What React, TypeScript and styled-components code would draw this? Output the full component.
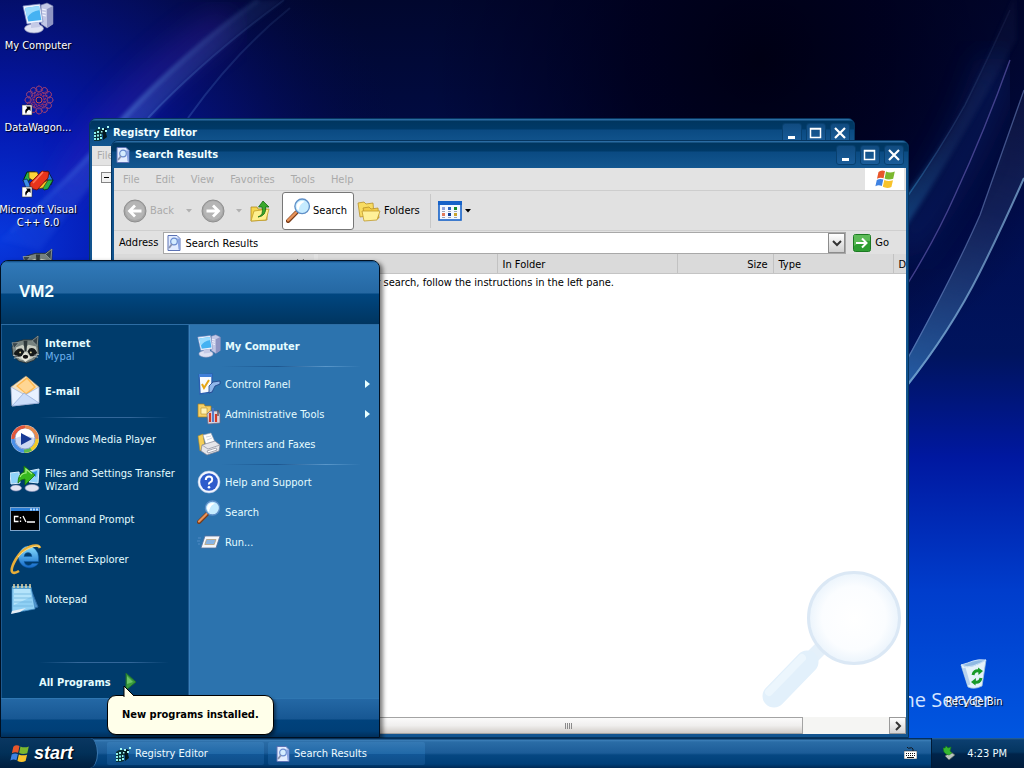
import React from 'react';
import styled, { createGlobalStyle, css } from 'styled-components';

const GlobalStyle = createGlobalStyle`
  * { box-sizing: border-box; }
  body {
    margin: 0;
    background: #0018a0;
    font-family: 'DejaVu Sans Condensed', 'DejaVu Sans', sans-serif;
    font-size: 11px;
    line-height: 13px;
    color: #000;
  }
  button, input, table { font: inherit; color: inherit; }
  button { border: 0; padding: 0; background: none; text-align: left; cursor: default; }
  svg { display: block; flex: none; }
  ul { margin: 0; padding: 0; list-style: none; }
`;

/* ---------- desktop ---------- */

const Screen = styled.div`
  display: flex;
  flex-direction: column;
  height: 100vh;
  overflow: hidden;
`;

const Desktop = styled.main`
  position: relative;
  flex: 1;
  min-height: 0;
`;

const WallpaperArt = styled.svg`
  position: absolute;
  inset: 0;
  width: 100%;
  height: 100%;
`;

const WallpaperTitle = styled.div`
  position: absolute;
  right: 33px;
  bottom: 24px;
  font-family: 'Open Sans', sans-serif;
  font-size: 20px;
  line-height: 28px;
  color: #d4e4ff;
`;

const IconColumn = styled.ul`
  position: relative;
  width: 76px;
`;

const IconCell = styled.li`
  height: 82px;
  padding-top: 2px;
`;

const Shortcut = styled.button`
  display: flex;
  flex-direction: column;
  align-items: center;
  gap: 5px;
  width: 76px;
  color: #fff;
  text-align: center;
  text-shadow: 1px 1px 1px #000;
  span { margin: 0 -8px; white-space: pre; }
`;

const BinSpot = styled.div`
  position: absolute;
  right: 12px;
  bottom: 30px;
`;

/* ---------- windows ---------- */

const Window = styled.section<{ $top: number; $left: number; $right: number }>`
  position: absolute;
  top: ${p => p.$top}px;
  left: ${p => p.$left}px;
  right: ${p => p.$right}px;
  bottom: 0;
  display: flex;
  flex-direction: column;
  padding: 0 2px 3px;
  border: 1px solid #06355f;
  border-radius: 7px 7px 0 0;
  background: #12548f;
  overflow: hidden;
`;

const TitleBar = styled.header`
  display: flex;
  align-items: center;
  flex: none;
  gap: 4px;
  height: 27px;
  margin: 0 -2px;
  padding: 0 4px 0 3px;
  background: linear-gradient(#2a6ba2 0, #2a6ba2 1px, #00365f 2px, #003a68 10px, #0a4a82 11px, #13568f 26px);
  color: #f0ffff;
  font-weight: bold;
`;

const TitleIcon = styled.span`
  display: grid;
  place-items: center;
  width: 16px;
`;

const WindowTitle = styled.h1`
  flex: 1;
  margin: 0;
  font-size: 11px;
  line-height: 14px;
`;

const TitleButtons = styled.div`
  display: flex;
  gap: 4px;
`;

const TitleButton = styled.button`
  display: grid;
  place-items: center;
  width: 20px;
  height: 20px;
  border: 1px solid #08406f;
  border-radius: 3px;
  background: linear-gradient(#104b80, #1a5d9a);
`;

const MenuBar = styled.nav`
  display: flex;
  align-items: center;
  flex: none;
  height: 23px;
  padding-left: 9px;
  gap: 16px;
  background: #e3e3e3;
  border-bottom: 1px solid #cdcdcd;
  button { color: #aaa; }
`;

const LogoCell = styled.div`
  display: grid;
  place-items: center;
  width: 39px;
  height: 22px;
  margin: 0 2px 0 auto;
  background: #fff;
`;

const RegistryMenu = styled(MenuBar)`
  height: 20px;
  padding-left: 5px;
`;

const RegistryTree = styled.div`
  flex: 1;
  padding: 6px 9px;
  background: #fff;
`;

const Toolbar = styled.div`
  display: flex;
  align-items: center;
  flex: none;
  height: 40px;
  padding-left: 9px;
  background: #e1e1e1;
  border-bottom: 1px solid #cfcfcf;
`;

const ToolButton = styled.button<{ $width: number; $active?: boolean; $muted?: boolean }>`
  display: flex;
  align-items: center;
  gap: 3px;
  flex: none;
  width: ${p => p.$width}px;
  height: 38px;
  ${p => p.$muted && css`color: #aaa;`}
  ${p => p.$active && css`
    padding-left: 3px;
    margin-right: 3px;
    gap: 2px;
    border: 1px solid #777;
    border-radius: 3px;
    background: #fff;
  `}
`;

const Divider = styled.span`
  flex: none;
  width: 1px;
  height: 34px;
  margin: 0 7px 0 0;
  background: #c8c8c8;
`;

const AddressBar = styled.form`
  display: flex;
  align-items: center;
  flex: none;
  height: 23px;
  padding: 0 17px 0 5px;
  gap: 5px;
  background: #e1e1e1;
`;

const Combo = styled.div`
  display: flex;
  align-items: center;
  flex: 1;
  height: 22px;
  padding-left: 3px;
  border: 1px solid #a8a8a8;
  background: #fff;
`;

const AddressInput = styled.input`
  flex: 1;
  min-width: 0;
  height: 18px;
  margin: 2px 0 0;
  padding: 0 0 0 4px;
  border: 0;
  background: none;
  outline: 0;
`;

const ComboArrow = styled.button`
  display: grid;
  place-items: center;
  width: 17px;
  height: 20px;
  border: 1px solid #8c8c8c;
  background: linear-gradient(#fff, #cfcfcf);
`;

const GoButton = styled.button`
  display: flex;
  align-items: center;
  gap: 4px;
  margin-left: 2px;
`;

const Panes = styled.div`
  display: flex;
  flex: 1;
  min-height: 0;
  background: #fff;
`;

const ExplorerPane = styled.aside`
  flex: none;
  width: 204px;
  border-right: 4px solid #e1e1e1;
`;

const PaneHeader = styled.div`
  display: flex;
  justify-content: flex-end;
  height: 19px;
  padding: 5px 9px;
  background: #dadada;
`;

const ListPane = styled.div`
  position: relative;
  display: flex;
  flex-direction: column;
  flex: 1;
  min-width: 0;
  overflow: hidden;
`;

const ListBody = styled.div`
  flex: 1;
  min-height: 0;
  overflow: hidden;
`;

const ResultsTable = styled.table`
  width: 700px;
  border-collapse: collapse;
  table-layout: fixed;
  th {
    height: 19px;
    padding: 2px 5px 0;
    border-right: 1px solid #c2c2c2;
    border-bottom: 1px solid #c4c4c4;
    background: #dadada;
    font-weight: normal;
    text-align: left;
  }
  td { padding: 2px 7px; white-space: nowrap; }
`;

const Th = styled.th<{ $width: number; $end?: boolean }>`
  width: ${p => p.$width}px;
  && { text-align: ${p => (p.$end ? 'right' : 'left')}; }
`;

const Watermark = styled.svg`
  position: absolute;
  right: 3px;
  bottom: 18px;
`;

const ScrollBar = styled.div`
  display: flex;
  flex: none;
  height: 17px;
  background: #f5f5f3;
`;

const ScrollThumb = styled.div`
  display: grid;
  place-items: center;
  flex: 467;
  border: 1px solid #a3a3a3;
  background: linear-gradient(#fbfbfb, #f0efee 50%, #d2cdc9);
`;

const ScrollTrack = styled.div`
  flex: 86;
`;

const ScrollButton = styled.button`
  display: grid;
  place-items: center;
  width: 17px;
  border: 1px solid #9a9a9a;
  background: linear-gradient(#fff, #d4d4d4);
`;

/* ---------- start menu ---------- */

const StartMenu = styled.section`
  position: absolute;
  left: 0;
  bottom: 0;
  display: flex;
  flex-direction: column;
  width: 380px;
  border: 1px solid #001022;
  border-radius: 8px 8px 0 0;
  background: #2c73ae;
  color: #e4fcff;
  box-shadow: 3px 2px 4px rgba(0, 0, 0, 0.5);
`;

const UserHeader = styled.header`
  display: flex;
  align-items: center;
  height: 64px;
  padding: 0 0 2px 18px;
  border-radius: 7px 7px 0 0;
  border-bottom: 1px solid #2d6da4;
  background: linear-gradient(#10497f 0, #3079b8 2px, #2568a3 32px, #004680 33px, #003560 63px);
  font: bold 17px/20px 'Liberation Sans', sans-serif;
  color: #f2ffff;
`;

const MenuColumns = styled.div`
  display: flex;
  height: 373px;
`;

const ProgramsColumn = styled.div`
  display: flex;
  flex-direction: column;
  width: 188px;
  padding: 4px 0 0 8px;
  border-left: 1px solid #1c588e;
  border-right: 1px solid #1c588e;
  background: #003c6c;
`;

const PlacesColumn = styled.div`
  flex: 1;
  padding: 6px 9px 0 7px;
  border-left: 1px solid #3a82bc;
`;

const ProgramItem = styled.button`
  display: flex;
  align-items: center;
  gap: 5px;
  width: 176px;
  height: 40px;
`;

const PinnedItem = styled(ProgramItem)`
  height: 41px;
`;

const PlaceItem = styled.button`
  display: flex;
  align-items: center;
  gap: 4px;
  width: 100%;
  height: 30px;
  span { flex: 1; }
`;

const ItemText = styled.span`
  display: flex;
  flex-direction: column;
  padding-top: 1px;
  small { font-size: 11px; color: #6db2ee; }
`;

const Rule = styled.hr<{ $light?: boolean }>`
  width: 130px;
  height: 1px;
  margin: 6px 0 1px 29px;
  border: 0;
  background: linear-gradient(90deg, transparent, #33679a 30%, #33679a 70%, transparent);
  ${p => p.$light && css`
    width: 140px;
    margin: 5px 0 2px 24px;
    background: linear-gradient(90deg, transparent, #1c5790 40%, #5a97ca 75%, transparent);
  `}
`;

const AllPrograms = styled.button`
  display: flex;
  align-items: center;
  gap: 14px;
  height: 34px;
  padding: 2px 0 0 29px;
  font-weight: bold;
`;

const Push = styled.div`
  flex: 1;
`;

const MenuFooter = styled.footer`
  height: 39px;
  border-top: 1px solid #2f77b2;
  background: linear-gradient(#2468a5, #175793 20px, #00427c 21px, #003f77 32px, #002f5b);
`;

const Balloon = styled.div`
  position: absolute;
  left: 107px;
  bottom: 3px;
  padding: 12px 14px;
  border: 1px solid #000;
  border-radius: 9px;
  background: #ffffea;
  color: #000;
  font-weight: bold;
  line-height: 14px;
  white-space: nowrap;
  box-shadow: 2px 2px 3px rgba(0, 0, 0, 0.4);
`;

const BalloonTail = styled.svg`
  position: absolute;
  left: 15px;
  top: -11px;
`;

/* ---------- taskbar ---------- */

const Taskbar = styled.footer`
  position: relative;
  display: flex;
  align-items: stretch;
  flex: none;
  height: 30px;
  background: linear-gradient(#05305a 0, #05305a 1px, #3d80b9 2px, #2a6ca6 4px, #1c5c98 15px, #064782 17px, #003f78 26px, #002a55);
  color: #eefaff;
`;

const StartButton = styled.button`
  display: flex;
  align-items: center;
  gap: 5px;
  width: 98px;
  padding-left: 10px;
  margin-right: 9px;
  border-right: 1px solid #3a78b0;
  border-radius: 0 8px 8px 0 / 0 15px 15px 0;
  background: linear-gradient(#0a3761, #023058 50%, #001e3e);
  font: italic bold 18px/20px 'Liberation Sans', sans-serif;
  color: #fff;
  text-shadow: 1px 1px 1px #001;
`;

const TaskButton = styled.button`
  display: flex;
  align-items: center;
  gap: 4px;
  width: 157px;
  height: 23px;
  margin: 4px 4px 0 0;
  padding-left: 8px;
  border-radius: 2px;
  background: linear-gradient(#3579b4, #2169a8 50%, #125797 52%, #0e4d88);
`;

const Keyboard = styled.button`
  margin: 0 14px 0 auto;
`;

const Tray = styled.div`
  display: flex;
  align-items: center;
  gap: 12px;
  padding: 0 17px 0 11px;
  border-left: 1px solid #001a36;
  background: linear-gradient(#2a659c 0, #0c3f70 2px, #043560 14px, #00244a 16px, #001c3c);
`;

/* ---------- drawings ---------- */

type Size = { size?: number };

const Wallpaper = () => (
  <WallpaperArt viewBox="0 0 1024 738" preserveAspectRatio="none" aria-hidden="true">
    <defs>
      <linearGradient id="sky" x1="0" y1="0" x2="0" y2="1">
        <stop offset="0" stopColor="#01072e" />
        <stop offset=".3" stopColor="#010e50" />
        <stop offset=".48" stopColor="#00145e" />
        <stop offset=".62" stopColor="#0018a0" />
        <stop offset=".8" stopColor="#003dcc" />
        <stop offset="1" stopColor="#0056e0" />
      </linearGradient>
      <radialGradient id="left" gradientUnits="userSpaceOnUse" cx="0" cy="240" r="420">
        <stop offset="0" stopColor="#0838dd" />
        <stop offset=".3" stopColor="#0418b4" stopOpacity=".95" />
        <stop offset=".65" stopColor="#050f70" stopOpacity=".7" />
        <stop offset="1" stopColor="#020640" stopOpacity="0" />
      </radialGradient>
      <radialGradient id="dark" gradientUnits="userSpaceOnUse" cx="760" cy="60" r="330">
        <stop offset="0" stopColor="#000014" />
        <stop offset=".4" stopColor="#00001c" stopOpacity=".85" />
        <stop offset="1" stopColor="#000020" stopOpacity="0" />
      </radialGradient>
      <linearGradient id="beam" gradientUnits="userSpaceOnUse" x1="270" y1="0" x2="0" y2="250">
        <stop offset="0" stopColor="#4a6fa8" stopOpacity=".25" />
        <stop offset=".5" stopColor="#5a8ee0" stopOpacity=".55" />
        <stop offset="1" stopColor="#3a78ff" stopOpacity=".15" />
      </linearGradient>
      <linearGradient id="ray" gradientUnits="userSpaceOnUse" x1="1024" y1="20" x2="908" y2="390">
        <stop offset="0" stopColor="#6d7298" stopOpacity=".1" />
        <stop offset=".5" stopColor="#5a78a8" stopOpacity=".35" />
        <stop offset="1" stopColor="#4ba8e0" stopOpacity=".9" />
      </linearGradient>
      <linearGradient id="veil" gradientUnits="userSpaceOnUse" x1="1015" y1="0" x2="900" y2="220">
        <stop offset="0" stopColor="#3a4270" stopOpacity=".15" />
        <stop offset=".6" stopColor="#2f5288" stopOpacity=".4" />
        <stop offset="1" stopColor="#2378b4" stopOpacity=".8" />
      </linearGradient>
      <filter id="fine"><feGaussianBlur stdDeviation="0.7" /></filter>
      <filter id="soft"><feGaussianBlur stdDeviation="2" /></filter>
      <filter id="haze"><feGaussianBlur stdDeviation="16" /></filter>
    </defs>
    <rect width="1024" height="738" fill="url(#sky)" />
    <rect width="1024" height="738" fill="url(#left)" />
    <rect width="1024" height="500" fill="url(#dark)" />
    <path d="M60 200Q110 100 230 20" stroke="#5b2bc8" strokeWidth="20" fill="none" opacity=".4" filter="url(#haze)" />
    <path d="M258 0Q185 52 122 116Q70 180 0 240L40 250Q90 185 150 118Q200 62 284 0Z" fill="url(#beam)" opacity=".5" filter="url(#soft)" />
    <path d="M258 0Q185 52 126 116Q74 176 10 232" stroke="url(#beam)" strokeWidth="3" fill="none" filter="url(#soft)" />
    <path d="M284 0Q205 58 148 118M290 8Q235 52 188 118" stroke="url(#beam)" strokeWidth="2" fill="none" opacity=".6" filter="url(#fine)" />
    <path d="M900 250Q975 150 1000 60" stroke="#123a9c" strokeWidth="30" fill="none" opacity=".35" filter="url(#haze)" />
    <path d="M1012 0Q985 65 965 105Q940 150 900 202V235Q945 170 1016 40V0Z" fill="url(#veil)" opacity=".55" filter="url(#soft)" />
    <path d="M1010 10Q985 65 965 105Q940 150 905 200" stroke="url(#veil)" strokeWidth="1.500" fill="none" filter="url(#fine)" />
    <path d="M1010 60Q985 130 955 195Q935 240 905 288" stroke="#6a60b8" strokeWidth="1.400" fill="none" opacity=".6" filter="url(#fine)" />
    <path d="M1024 90Q1003 150 980 215Q955 272 905 362V390Q960 320 990 250L1024 180Z" fill="url(#ray)" opacity=".55" filter="url(#fine)" />
    <path d="M1024 90Q1003 150 980 215Q955 272 908 358" stroke="#7a94d0" strokeWidth="1.300" fill="none" opacity=".5" filter="url(#fine)" />
    <path d="M1024 178Q1000 232 980 272Q950 332 905 388" stroke="#86b4dc" strokeWidth="2" fill="none" opacity=".7" filter="url(#fine)" />
  </WallpaperArt>
);

const Computer = ({ size = 32 }: Size) => (
  <svg width={size} height={size} viewBox="0 0 32 32">
    <path d="M19 3l6-2 6 3v18l-6 4-6-4z" fill="#c3c8e6" stroke="#7279a8" strokeWidth=".6" />
    <path d="M25 7l6-3v18l-6 4z" fill="#8f95c4" />
    <path d="M20 7l4 1M20 10l4 1M20 13l4 1" stroke="#f4f5ff" strokeWidth="1.2" />
    <path d="M1 4l17-2 3 18-16 2z" fill="#eef4ff" stroke="#7b8bc0" strokeWidth=".7" />
    <path d="M3 6l14-2 2.300 14-13 1.600z" fill="#45b2f2" />
    <path d="M3 6l14-2 .7 4Q9 9 5 16z" fill="#9adcff" />
    <ellipse cx="12" cy="26.500" rx="9.500" ry="4.500" fill="#dfe2f3" stroke="#8b90b8" strokeWidth=".7" />
    <path d="M9 21l8-1 1 5-9 1z" fill="#c5cae6" />
  </svg>
);

const ShortcutArrow = () => (
  <g>
    <rect x="0" y="21" width="10" height="10" fill="#fff" stroke="#333" strokeWidth=".6" />
    <path d="M4 22.500h4.500v4.500L7 25.600Q4.500 27 4 30 1.800 26.500 5.300 24z" fill="#000" />
  </g>
);

const DataWagon = () => (
  <svg width="32" height="32" viewBox="0 0 32 32">
    <g fill="none" stroke="#a83464" strokeWidth=".8">
      {[0, 30, 60, 90, 120, 150].map(a => (
        <g key={a} transform={`rotate(${a} 17 16)`}>
          <ellipse cx="17" cy="16" rx="14" ry="5" strokeDasharray="2 1" />
          <circle cx="17" cy="5" r="3" stroke="#84407e" />
          <circle cx="17" cy="27" r="3" stroke="#84407e" />
        </g>
      ))}
    </g>
    <circle cx="17" cy="16" r="3" fill="#07108a" stroke="#d2504a" />
    <ShortcutArrow />
  </svg>
);

const VisualCpp = () => (
  <svg width="32" height="32" viewBox="0 0 32 32">
    <path d="M1 15L5 6h8l-3 5-6 7z" fill="#28b04a" stroke="#04260c" />
    <path d="M7 6h8l2 4-5 5-5-3z" fill="#ffd43a" stroke="#5a3a00" strokeWidth=".7" />
    <path d="M1 14l4-1 4 8-1 3-4-2z" fill="#3c8fe8" stroke="#081c50" strokeWidth=".7" />
    <path d="M20 6l6-1 5 9-2 5-5-7z" fill="#2678e0" stroke="#061c50" />
    <path d="M31 14l-5 9-4 1-2-3 6-7z" fill="#28b04a" stroke="#04260c" strokeWidth=".7" />
    <path d="M26 14l-5 8-6 1 5-6z" fill="#f6c928" stroke="#4a3300" strokeWidth=".7" />
    <path d="M8 17L20 5l7 1-1 6-11 12-7-2z" fill="#e8341c" stroke="#6a0d04" strokeWidth=".8" />
    <path d="M11 17L21 6" stroke="#ff7a5c" strokeWidth="1.500" />
    <ShortcutArrow />
  </svg>
);

const Raccoon = ({ size = 30 }: Size) => (
  <svg width={size} height={size} viewBox="0 0 30 30">
    <path d="M3 8l6-2 4-1h5l4 0 6-4 0 9 1 9-5 7-8 3-8-2-6-6-1-8z" fill="#77827f" stroke="#20292c" strokeWidth=".8" />
    <path d="M1 8l7 0-5 6zM28 1l-6 5 5 5z" fill="#39454a" stroke="#9aa6a6" strokeWidth=".7" />
    <path d="M5 13l7-3 3 3 3-3 8 2 1 7-5 5-6 3-7-2-4-4z" fill="#c9cdc2" />
    <path d="M3 19q3-6 8-5l3 3-3 5-6 1zM27 18q-3-6-8-4l-2 3 3 5 5 0z" fill="#15191a" />
    <path d="M13 6h4l-1 11h-2z" fill="#2e373a" />
    <path d="M10 23l5-5 5 5-5 5z" fill="#ecebdf" />
    <ellipse cx="15" cy="22.500" rx="2.800" ry="2" fill="#111" />
    <circle cx="9.500" cy="18" r="1" fill="#d8cf9a" /><circle cx="20.500" cy="18" r="1" fill="#d8cf9a" />
    <path d="M2 21l5 1M3 24l5-1M29 20l-5 1M28 23l-5-1" stroke="#cfd6d4" strokeWidth=".8" />
  </svg>
);

const Mail = () => (
  <svg width="30" height="32" viewBox="0 0 30 32">
    <path d="M1 12L16 1l13 11v16L2 31z" fill="#f3e1c0" stroke="#a98a5c" strokeWidth=".6" />
    <path d="M6 11L17 2l9 10-9 8z" fill="#ffb84e" />
    <path d="M8 11l9-7 7 8-8 6z" fill="#ffd694" />
    <path d="M1 12l14 8 14-8v16L2 31z" fill="#e8f1ff" stroke="#8da6d6" strokeWidth=".6" />
    <path d="M2 31l12-13L29 28z" fill="#cbddfa" stroke="#8da6d6" strokeWidth=".7" />
  </svg>
);

const MediaPlayer = () => (
  <svg width="30" height="30" viewBox="0 0 30 30">
    <circle cx="15" cy="15" r="14" fill="#d5dff2" />
    <g fill="none" strokeWidth="3.400">
      <path d="M15 3A12 12 0 0 1 27 15" stroke="#e88a4e" />
      <path d="M27 15A12 12 0 0 1 15 27" stroke="#f2c926" />
      <path d="M15 27A12 12 0 0 1 3 15" stroke="#4a8fe8" />
      <path d="M3 15A12 12 0 0 1 15 3" stroke="#e0573c" />
      <path d="M21 25A12 12 0 0 1 14 27" stroke="#5aba50" />
    </g>
    <circle cx="15" cy="15" r="10" fill="#ccd8f2" stroke="#8aa0cc" />
    <path d="M5.500 14a9.500 9.500 0 0 1 19 0Q15 10 5.500 14z" fill="#fff" />
    <path d="M11 9l11 6-11 6z" fill="#173a94" />
  </svg>
);

const Transfer = () => (
  <svg width="30" height="30" viewBox="0 0 30 30">
    <path d="M0 9l9-1 1 11-9 1zM19 7l10-2-1 14-9-1z" fill="#8fd2fa" stroke="#d5ecff" />
    <path d="M20 9l7-2-1 6z" fill="#2f8fe0" />
    <ellipse cx="6" cy="24" rx="5.500" ry="3" fill="#e2e4f2" stroke="#8c90b8" strokeWidth=".6" />
    <ellipse cx="22" cy="24" rx="7" ry="3.500" fill="#e2e4f2" stroke="#8c90b8" strokeWidth=".6" />
    <path d="M8 19q0-9 6-11V2l11 9-10 10v-6q-4 0-7 4z" fill="#37b81e" stroke="#1a7208" strokeWidth=".8" />
    <path d="M10 13q2-4 6-4V5l6 5" fill="none" stroke="#a8ee88" strokeWidth="1.200" />
  </svg>
);

const CommandPrompt = () => (
  <svg width="30" height="24" viewBox="0 0 30 24">
    <rect x=".5" y=".5" width="29" height="23" fill="#000" stroke="#7fa5cc" />
    <rect x="1" y="1" width="28" height="3" fill="#2a7fd8" />
    <path d="M20 1.500h2v2h-2zM23 1.500h2v2h-2zM26 1.500h2v2h-2z" fill="#b8dcff" />
    <path d="M8.500 9.500h-4v5h4M10.500 10v1.500M10.500 13.500V15M13 9l3 6M17 15h8" fill="none" stroke="#fff" strokeWidth="1.300" />
  </svg>
);

const Explorer = () => (
  <svg width="32" height="32" viewBox="0 0 32 32">
    <defs>
      <linearGradient id="ie" x1="0" y1="0" x2="0" y2="1">
        <stop offset="0" stopColor="#8be0ff" /><stop offset="1" stopColor="#1268c8" />
      </linearGradient>
    </defs>
    <path d="M17.500 3a11 11 0 0 1 11 11.500v4H14q1 4 4.500 4 2.500 0 3.500-2h6.200A11 11 0 1 1 17.500 3zM14 13.500h8q-.5-4-4-4t-4 4z" fill="url(#ie)" fillRule="evenodd" stroke="#1260b0" strokeWidth=".5" />
    <path d="M30 5C28-1 13 4 6 16S1 33 9 28" fill="none" stroke="#e8ae38" strokeWidth="2.600" />
    <path d="M30 4C27 1 14 6 8 14" fill="none" stroke="#fbe08c" strokeWidth="1" />
  </svg>
);

const Notepad = () => (
  <svg width="30" height="32" viewBox="0 0 30 32">
    <path d="M20 4l8 20-14 4z" fill="#4f94cc" stroke="#2c6ba5" />
    <path d="M2 4h19l4 22-23 4z" fill="#8fd0f4" stroke="#3c86be" strokeWidth=".7" />
    <path d="M4 6h16l1 8L4 22z" fill="#b4e4fb" />
    <path d="M4 11h17M4 15h18M4 19h18M3 23h20" stroke="#6fb4de" strokeWidth=".8" />
    <path d="M2 3h19v3H2z" fill="#57a0cf" />
    <path d="M4 1v4M8 1v4M12 1v4M16 1v4M20 1v4" stroke="#e9d8a6" strokeWidth="1.500" />
    <path d="M1 31l1-3 14-3-6 4z" fill="#e7edf4" />
  </svg>
);

const ControlPanel = () => (
  <svg width="24" height="24" viewBox="0 0 24 24">
    <path d="M2 3l13-1v18l-12 2z" fill="#f6faff" stroke="#2b5fb0" strokeWidth="1.400" />
    <path d="M2 2h13v3H2z" fill="#3f7fd8" />
    <path d="M5 12l2 4 5-8" fill="none" stroke="#e4a516" strokeWidth="2" />
    <path d="M12 14l4-4 7-1 0 3-5 2-3 6-3 1z" fill="#8fb6ea" stroke="#1d3f84" strokeWidth=".8" />
  </svg>
);

const AdminTools = () => (
  <svg width="24" height="24" viewBox="0 0 24 24">
    <path d="M1 2h6l1 2h6v11H1z" fill="#f6d168" stroke="#a77d1c" strokeWidth=".7" />
    <path d="M4 6h6v6H4z" fill="#fff3b8" stroke="#b8902c" strokeWidth=".6" />
    <path d="M10 12l3-3h8l2 3v9l-12 1z" fill="#d9d4e0" stroke="#6c6884" strokeWidth=".7" />
    <path d="M13 11v9M19 12v8" stroke="#d43a26" strokeWidth="2.200" />
    <path d="M16 6v14" stroke="#4a74c8" strokeWidth="1.800" />
    <path d="M21 8v6" stroke="#5c5866" strokeWidth="1.500" />
  </svg>
);

const Printer = () => (
  <svg width="24" height="24" viewBox="0 0 24 24">
    <path d="M1 4l5-2 2 13-5 4z" fill="#f4cf5a" stroke="#a88428" strokeWidth=".6" />
    <path d="M6 3l8-2 4 9-9 3z" fill="#fff" stroke="#9aa0ae" strokeWidth=".6" />
    <path d="M5 13l13-4 5 4-1 6-12 4-6-4z" fill="#e6e6ea" stroke="#7d8090" strokeWidth=".7" />
    <path d="M5 13l6 4 12-4" fill="none" stroke="#9598a6" strokeWidth=".8" />
    <path d="M10 19l9-3 1 2-9 3z" fill="#fdfdff" stroke="#777b8a" strokeWidth=".6" />
    <path d="M9 5l5-1M10 8l5-2" stroke="#c8ccd6" strokeWidth=".8" />
  </svg>
);

const Help = () => (
  <svg width="24" height="24" viewBox="0 0 24 24">
    <circle cx="12" cy="12" r="11" fill="#f3f7ff" stroke="#b2c2e4" strokeWidth=".6" />
    <circle cx="12" cy="12" r="8.800" fill="#2e5bcc" />
    <path d="M8.800 10q0-3.500 3.200-3.500T15.200 9.500q0 1.700-1.800 2.700T12 14.500" fill="none" stroke="#fff" strokeWidth="2" />
    <circle cx="12" cy="17.300" r="1.300" fill="#fff" />
  </svg>
);

const Magnifier = ({ size = 24 }: Size) => (
  <svg width={size} height={size} viewBox="0 0 24 24">
    <path d="M10 14l-8 8" stroke="#7a3c18" strokeWidth="4" strokeLinecap="round" />
    <path d="M9.500 14l-7.500 7.500" stroke="#e8935a" strokeWidth="2.200" strokeLinecap="round" />
    <circle cx="15.500" cy="8" r="7" fill="#c5ebff" stroke="#6090c8" strokeWidth="1.300" />
    <path d="M10 8a5.500 5.500 0 0 1 8-4.500Q13 5 12 12 10 10.500 10 8z" fill="#fff" />
  </svg>
);

const Run = () => (
  <svg width="24" height="24" viewBox="0 0 24 24">
    <path d="M8 6h15l-4 12H4z" fill="#f4f6fa" stroke="#57709a" strokeWidth=".8" />
    <path d="M9.500 9.500h9.500l-1.800 5H7.800z" fill="#88b4e4" stroke="#b8a078" strokeWidth=".8" />
    <path d="M1 8h3M0 11h3M1 14h2" stroke="#5a93cc" strokeWidth=".8" />
  </svg>
);

const Flag = ({ size = 18 }: Size) => (
  <svg width={size} height={size} viewBox="0 0 20 20">
    <path d="M3.500 3Q6 .5 10 2l-1.400 7.200Q5 8 2 9.800z" fill="#e8562a" />
    <path d="M11 2.500Q15 4.500 19.800 2.500L18.200 9.800Q13.500 11.500 9.600 9.600z" fill="#7cb82f" />
    <path d="M1.800 11Q5 9.200 8.300 10.500L6.800 17Q3.500 15.500 .4 17.300z" fill="#3f82e2" />
    <path d="M9.300 11Q13.500 12.800 18 11.200L16.400 18Q12 20 7.800 17.800z" fill="#f8c32c" />
  </svg>
);

const Registry = () => (
  <svg width="16" height="16" viewBox="0 0 16 16">
    <path d="M1 6l3-2 5 0v11l-3 1H1z" fill="#0b3238" />
    <path d="M1 7h2v2H1zM4 6h2v2H4zM1 10h2v2H1zM4 9.500h2v2H4zM1 13h2v2H1zM4 13h2v2H4zM7 12h2v2H7zM7 9h1.500v2H7z" fill="#8df0ea" />
    <path d="M8 6l3-3 3 1-1 4-3 2zM10 10l3-2 1 4-4 3z" fill="#04181e" />
    <path d="M9 3h2v2H9zM14 1h2v2h-2zM5 2h2v2H5zM12 5h2v2h-2zM8 6h1.500v1.500H8z" fill="#a5f7f2" />
  </svg>
);

const SearchPage = () => (
  <svg width="14" height="16" viewBox="0 0 14 16">
    <path d="M1 .5h9l3 3v12H1z" fill="#e2ecff" stroke="#5c72b4" />
    <path d="M10 .5v3h3v11h-1.500z" fill="#8aa4e2" />
    <circle cx="7" cy="6.500" r="3.300" fill="#d4ecff" stroke="#6a8cd0" strokeWidth="1.200" />
    <path d="M5 9l-3 4" stroke="#8a93b0" strokeWidth="1.800" />
  </svg>
);

const NavArrow = ({ forward }: { forward?: boolean }) => (
  <svg width="24" height="24" viewBox="0 0 24 24">
    <circle cx="12" cy="12" r="11" fill="#a6a6a6" stroke="#8f8f8f" />
    <circle cx="12" cy="11.500" r="9.500" fill="#b5b5b5" />
    <path d={forward ? 'M5.500 12h12M12 6.500l5.500 5.500-5.500 5.500' : 'M18.500 12h-12M12 6.500L6.500 12l5.500 5.500'} fill="none" stroke="#fff" strokeWidth="2.800" />
  </svg>
);

const Caret = ({ color = '#000' }: { color?: string }) => (
  <svg width="6" height="4" viewBox="0 0 6 4"><path d="M0 0h6L3 3.500z" fill={color} /></svg>
);

const FolderUp = () => (
  <svg width="22" height="24" viewBox="0 0 22 24">
    <path d="M2 8h6l1 2h9v11l-16 1z" fill="#f5d64e" stroke="#b18c1c" strokeWidth=".8" />
    <path d="M5 12l15-2-3 11-15 1z" fill="#fff08e" stroke="#c29d28" strokeWidth=".8" />
    <path d="M9 18q6-2 4-10H9.500L14 2l6 6h-3.500q1 9-7.500 10z" fill="#3aa92c" stroke="#156a10" strokeWidth=".8" />
  </svg>
);

const FoldersIcon = () => (
  <svg width="24" height="22" viewBox="0 0 24 22">
    <path d="M1 3l6-1 2 2 7-1 1 12-14 2z" fill="#f8dc62" stroke="#b8922a" strokeWidth=".8" />
    <path d="M6 8l6-1 2 2 7-1 1 10-13 2z" fill="#f3cd48" stroke="#b8922a" strokeWidth=".8" />
    <path d="M5 11l18 0-3 9-13 1z" fill="#fff199" stroke="#c09a2c" strokeWidth=".8" />
  </svg>
);

const ViewsIcon = () => (
  <svg width="24" height="20" viewBox="0 0 24 20">
    <rect x="1" y="1" width="22" height="18" fill="#f3f8ff" stroke="#1662c8" strokeWidth="1.600" />
    <rect x="0" y="0" width="24" height="4" fill="#1662c8" />
    <path d="M4 6h3v3H4z" fill="#8fa2dd" /><path d="M10 6h3v3h-3z" fill="#2e66c4" /><path d="M16 6h3v3h-3z" fill="#168a2a" />
    <path d="M4 12h3v3H4z" fill="#e07a58" /><path d="M10 12h3v3h-3z" fill="#0f3d94" /><path d="M16 12h3v3h-3z" fill="#c9a42c" />
    <path d="M4 10.500h3M10 10.500h3M16 10.500h3M4 16.500h3M10 16.500h3M16 16.500h3" stroke="#9aa5b5" />
  </svg>
);

const GoIcon = () => (
  <svg width="18" height="18" viewBox="0 0 18 18">
    <rect x=".5" y=".5" width="17" height="17" rx="2" fill="#2f9e33" stroke="#1c7a22" />
    <path d="M1 1h16v6Q8 6 1 12z" fill="#5dbb58" />
    <path d="M3 9h10M9 4.500L13.500 9 9 13.500" fill="none" stroke="#fff" strokeWidth="2" />
  </svg>
);

const RecycleBin = () => (
  <svg width="32" height="32" viewBox="0 0 32 32">
    <path d="M3 7q6 3 12 1T28 2l-4 26q-8 4-14 1z" fill="#e4f2fa" stroke="#9fc0dc" strokeWidth=".8" />
    <path d="M3 7q6 3 12 1T28 2q-8-1-13 1T3 7z" fill="#8fb9e2" stroke="#dff0ff" strokeWidth=".8" />
    <path d="M6 10l5 17" stroke="#b6d2ee" strokeWidth="3" />
    <g fill="none" stroke="#189a28" strokeWidth="3">
      <path d="M15 17q1-5 6-4M23 20q-1 5-6 4" />
    </g>
    <path d="M20 9.500l5 3.500-4.500 4zM18 20l-5 4 4.500 3.500z" fill="#189a28" />
  </svg>
);

const KeyboardIcon = () => (
  <svg width="13" height="12" viewBox="0 0 13 12">
    <path d="M3 0q1 2 3 1t3 1v2" fill="none" stroke="#101820" />
    <rect x="0" y="4" width="13" height="8" fill="#fff" stroke="#222" strokeWidth=".5" />
    <path d="M2 6.500h9M2 8.500h9" stroke="#111" strokeDasharray="1 1" /><path d="M3 10.500h7" stroke="#111" />
  </svg>
);

const SafeRemove = () => (
  <svg width="12" height="14" viewBox="0 0 12 14">
    <path d="M2 10l6-4 4 3-6 5z" fill="#b9c3bd" stroke="#4e5a58" strokeWidth=".7" />
    <path d="M0 2l2 0 1-2 2 2 3-1-1 4 2 2-3 2-3-1-2-2z" fill="#35b531" stroke="#1a7d18" strokeWidth=".6" />
  </svg>
);

const Chevron = ({ down }: { down?: boolean }) => (
  <svg width="10" height="10" viewBox="0 0 10 10">
    <path d={down ? 'M1 3l4 4 4-4' : 'M3 1l4 4-4 4'} fill="none" stroke="#333" strokeWidth="2" />
  </svg>
);

const SubmenuArrow = () => (
  <svg width="5" height="8" viewBox="0 0 5 8"><path d="M0 0l5 4-5 4z" fill="#e8ffff" /></svg>
);

const ControlGlyphs = () => (
  <TitleButtons>
    <TitleButton aria-label="Minimize">
      <svg width="14" height="14" viewBox="0 0 14 14"><path d="M3 10h7v3H3z" fill="#fff" /></svg>
    </TitleButton>
    <TitleButton aria-label="Maximize">
      <svg width="14" height="14" viewBox="0 0 14 14"><path d="M1.500 2.500h10v9h-10zM1 3h11" fill="none" stroke="#fff" strokeWidth="1.500" /></svg>
    </TitleButton>
    <TitleButton aria-label="Close">
      <svg width="14" height="14" viewBox="0 0 14 14"><path d="M2 2l10 10M12 2L2 12" stroke="#fff" strokeWidth="2.200" /></svg>
    </TitleButton>
  </TitleButtons>
);

/* ---------- page ---------- */

const RegistryWindow = () => (
  <Window $top={118} $left={89} $right={169}>
    <TitleBar>
      <TitleIcon><Registry /></TitleIcon>
      <WindowTitle>Registry Editor</WindowTitle>
      <ControlGlyphs />
    </TitleBar>
    <RegistryMenu><button disabled>File</button></RegistryMenu>
    <RegistryTree>
      <svg width="11" height="11" viewBox="0 0 11 11">
        <rect x=".5" y=".5" width="10" height="10" fill="#f2f2f2" stroke="#848484" />
        <path d="M3 5.500h5" stroke="#000" />
      </svg>
    </RegistryTree>
  </Window>
);

const SearchWindow = () => (
  <Window $top={140} $left={111} $right={115}>
    <TitleBar>
      <TitleIcon><SearchPage /></TitleIcon>
      <WindowTitle>Search Results</WindowTitle>
      <ControlGlyphs />
    </TitleBar>
    <MenuBar>
      {['File', 'Edit', 'View', 'Favorites', 'Tools', 'Help'].map(m => (
        <button key={m} disabled>{m}</button>
      ))}
      <LogoCell><Flag size={20} /></LogoCell>
    </MenuBar>
    <Toolbar>
      <ToolButton $width={78} $muted disabled><NavArrow /> Back <Push /><Caret color="#b0b0b0" /><Push /></ToolButton>
      <ToolButton $width={48} $muted disabled aria-label="Forward"><NavArrow forward /><Push /><Caret color="#b0b0b0" /><Push /></ToolButton>
      <ToolButton $width={33} aria-label="Up"><FolderUp /></ToolButton>
      <ToolButton $width={72} $active><Magnifier size={25} /> Search</ToolButton>
      <ToolButton $width={73}><FoldersIcon /> Folders</ToolButton>
      <Divider />
      <ToolButton $width={40} aria-label="Views"><ViewsIcon /><Caret /></ToolButton>
    </Toolbar>
    <AddressBar onSubmit={e => e.preventDefault()}>
      <label htmlFor="address">Address</label>
      <Combo>
        <SearchPage />
        <AddressInput id="address" defaultValue="Search Results" />
        <ComboArrow type="button" aria-label="Show addresses"><Chevron down /></ComboArrow>
      </Combo>
      <GoButton><GoIcon /> Go</GoButton>
    </AddressBar>
    <Panes>
      <ExplorerPane>
        <PaneHeader>
          <button aria-label="Close pane">
            <svg width="9" height="9" viewBox="0 0 9 9"><path d="M1 1l7 7M8 1L1 8" stroke="#000" strokeWidth="1.800" /></svg>
          </button>
        </PaneHeader>
      </ExplorerPane>
      <ListPane>
        <Watermark width="146" height="146" viewBox="0 0 146 146" aria-hidden="true">
          <defs>
            <radialGradient id="lens"><stop offset="0" stopColor="#fff" /><stop offset=".7" stopColor="#fbfdff" /><stop offset="1" stopColor="#ebf4fc" /></radialGradient>
          </defs>
          <path d="M66 76L50 92" stroke="#e4f0fa" strokeWidth="14" />
          <path d="M50 92L17 126" stroke="#e2f0fb" strokeWidth="23" strokeLinecap="round" />
          <path d="M45 88L12 122" stroke="#ecf6fd" strokeWidth="8" strokeLinecap="round" />
          <circle cx="97" cy="48" r="45.500" fill="url(#lens)" stroke="#dbe8f5" strokeWidth="3" />
        </Watermark>
        <ListBody>
          <ResultsTable>
            <thead>
              <tr>
                <Th $width={179} aria-label="Name" />
                <Th $width={180}>In Folder</Th>
                <Th $width={96} $end>Size</Th>
                <Th $width={120}>Type</Th>
                <Th $width={125}>Date</Th>
              </tr>
            </thead>
            <tbody>
              <tr><td colSpan={5}>To run your search, follow the instructions in the left pane.</td></tr>
            </tbody>
          </ResultsTable>
        </ListBody>
        <ScrollBar>
          <ScrollButton aria-label="Scroll left" />
          <ScrollThumb>
            <svg width="8" height="6" viewBox="0 0 8 6"><path d="M.5 0v6M2.500 0v6M4.500 0v6M6.500 0v6" stroke="#8a8a8a" /></svg>
          </ScrollThumb>
          <ScrollTrack />
          <ScrollButton aria-label="Scroll right"><Chevron /></ScrollButton>
        </ScrollBar>
      </ListPane>
    </Panes>
  </Window>
);

const programs = [
  { name: 'Windows Media Player', icon: <MediaPlayer /> },
  { name: 'Files and Settings Transfer Wizard', icon: <Transfer /> },
  { name: 'Command Prompt', icon: <CommandPrompt /> },
  { name: 'Internet Explorer', icon: <Explorer /> },
  { name: 'Notepad', icon: <Notepad /> },
];

const IconSlot = styled.span`
  display: grid;
  place-items: center;
  flex: none;
  width: 30px;
`;

const StartPanel = () => (
  <StartMenu aria-label="Start menu">
    <UserHeader>VM2</UserHeader>
    <MenuColumns>
      <ProgramsColumn>
        <PinnedItem>
          <IconSlot><Raccoon size={29} /></IconSlot>
          <ItemText><strong>Internet</strong><small>Mypal</small></ItemText>
        </PinnedItem>
        <PinnedItem>
          <IconSlot><Mail /></IconSlot>
          <ItemText><strong>E-mail</strong></ItemText>
        </PinnedItem>
        <Rule />
        {programs.map(p => (
          <ProgramItem key={p.name}>
            <IconSlot>{p.icon}</IconSlot>
            <ItemText>{p.name}</ItemText>
          </ProgramItem>
        ))}
        <Push />
        <Rule />
        <AllPrograms>
          All Programs
          <svg width="12" height="18" viewBox="0 0 12 18"><path d="M1 0l10 9-10 8z" fill="#3a9c3c" stroke="#1d6b30" /><path d="M2 3l6 6-6 2z" fill="#6cc466" /></svg>
        </AllPrograms>
      </ProgramsColumn>
      <PlacesColumn>
        <PlaceItem><Computer size={24} /><span><strong>My Computer</strong></span></PlaceItem>
        <Rule $light />
        <PlaceItem><ControlPanel /><span>Control Panel</span><SubmenuArrow /></PlaceItem>
        <PlaceItem><AdminTools /><span>Administrative Tools</span><SubmenuArrow /></PlaceItem>
        <PlaceItem><Printer /><span>Printers and Faxes</span></PlaceItem>
        <Rule $light />
        <PlaceItem><Help /><span>Help and Support</span></PlaceItem>
        <PlaceItem><Magnifier /><span>Search</span></PlaceItem>
        <PlaceItem><Run /><span>Run...</span></PlaceItem>
      </PlacesColumn>
    </MenuColumns>
    <MenuFooter />
  </StartMenu>
);

export default function App() {
  return (
    <Screen>
      <GlobalStyle />
      <Desktop>
        <Wallpaper />
        <WallpaperTitle>One Server</WallpaperTitle>
        <IconColumn>
          <IconCell><Shortcut><Computer /><span>My Computer</span></Shortcut></IconCell>
          <IconCell><Shortcut><DataWagon /><span>DataWagon...</span></Shortcut></IconCell>
          <IconCell><Shortcut><VisualCpp /><span>{'Microsoft Visual\nC++ 6.0'}</span></Shortcut></IconCell>
          <IconCell><Shortcut aria-label="Mypal"><Raccoon size={32} /></Shortcut></IconCell>
        </IconColumn>
        <BinSpot><Shortcut><RecycleBin /><span>Recycle Bin</span></Shortcut></BinSpot>
        <RegistryWindow />
        <SearchWindow />
        <StartPanel />
        <Balloon role="status">
          New programs installed.
          <BalloonTail width="16" height="12" viewBox="0 0 16 12">
            <path d="M1 12V1l11 11" fill="#ffffea" stroke="#000" />
            <path d="M2 11h10v1H2z" fill="#ffffea" />
          </BalloonTail>
        </Balloon>
      </Desktop>
      <Taskbar>
        <StartButton><Flag size={19} />start</StartButton>
        <TaskButton><Registry />Registry Editor</TaskButton>
        <TaskButton><SearchPage />Search Results</TaskButton>
        <Keyboard aria-label="Keyboard layout"><KeyboardIcon /></Keyboard>
        <Tray><SafeRemove /><time>4:23 PM</time></Tray>
      </Taskbar>
    </Screen>
  );
}
